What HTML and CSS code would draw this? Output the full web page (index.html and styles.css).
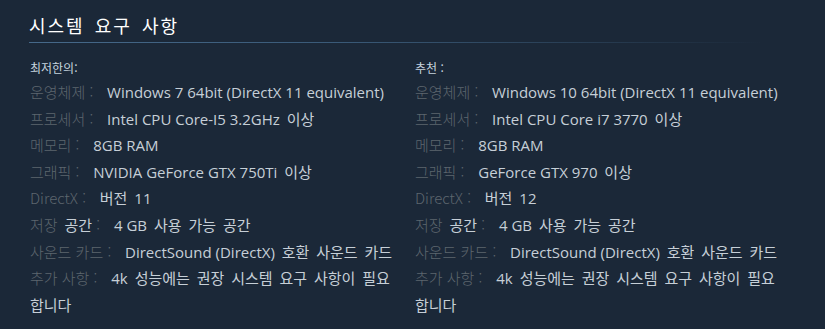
FILE: index.html
```html
<!DOCTYPE html>
<html lang="ko">
<head>
<meta charset="utf-8">
<title>시스템 요구 사항</title>
<link rel="stylesheet" href="styles.css">
</head>
<body>
<section class="sysreq">
  <h2 class="sysreq-title">시스템 요구 사항</h2>
  <div class="sysreq-cols">
    <div class="sysreq-col">
      <div class="sysreq-head">최저한의:</div>
      <ul class="sysreq-list">
        <li><span class="lbl">운영체제 :</span> Windows 7 64bit (DirectX 11 equivalent)</li>
        <li><span class="lbl">프로세서 :</span> Intel CPU Core-I5 3.2GHz<span class="ko"> 이상</span></li>
        <li><span class="lbl">메모리 :</span> 8GB RAM</li>
        <li><span class="lbl">그래픽 :</span> NVIDIA GeForce GTX 750Ti<span class="ko"> 이상</span></li>
        <li><span class="lbl">DirectX :</span> <span class="ko">버전 11</span></li>
        <li><span class="dim">저장</span> <span class="ko">공간</span><span class="lbl"> :</span> 4 GB<span class="ko"> 사용 가능 공간</span></li>
        <li><span class="lbl">사운드 카드 :</span> DirectSound (DirectX)<span class="ko"> 호환 사운드 카드</span></li>
        <li><span class="lbl">추가 사항 :</span> <span class="ko">4k 성능에는 권장 시스템 요구 사항이 필요합니다</span></li>
      </ul>
    </div>
    <div class="sysreq-col">
      <div class="sysreq-head">추천 :</div>
      <ul class="sysreq-list">
        <li><span class="lbl">운영체제 :</span> Windows 10 64bit (DirectX 11 equivalent)</li>
        <li><span class="lbl">프로세서 :</span> Intel CPU Core i7 3770<span class="ko"> 이상</span></li>
        <li><span class="lbl">메모리 :</span> 8GB RAM</li>
        <li><span class="lbl">그래픽 :</span> GeForce GTX 970<span class="ko"> 이상</span></li>
        <li><span class="lbl">DirectX :</span> <span class="ko">버전 12</span></li>
        <li><span class="dim">저장</span> <span class="ko">공간</span><span class="lbl"> :</span> 4 GB<span class="ko"> 사용 가능 공간</span></li>
        <li><span class="lbl">사운드 카드 :</span> DirectSound (DirectX)<span class="ko"> 호환 사운드 카드</span></li>
        <li><span class="lbl">추가 사항 :</span> <span class="ko">4k 성능에는 권장 시스템 요구 사항이 필요합니다</span></li>
      </ul>
    </div>
  </div>
</section>
</body>
</html>
```

FILE: styles.css
```css
html, body {
  margin: 0;
  padding: 0;
  background: #1b2838;
}

body {
  font-family: "Open Sans", "Noto Sans CJK KR", sans-serif;
  color: #c6d4df;
}

.sysreq {
  padding: 12px 0 0 30px;
  width: 770px;
}

.sysreq-title {
  margin: 0 0 0 -1px;
  font-family: "Noto Sans CJK KR", sans-serif;
  font-weight: normal;
  font-size: 18px;
  letter-spacing: 2px;
  word-spacing: 3px;
  line-height: 26px;
  color: #ffffff;
  padding-bottom: 4px;
  border-bottom: 1px solid transparent;
  border-image: linear-gradient(to right, #46698a 0%, #3a5a78 40%, rgba(59, 90, 120, 0) 95%) 1;
}

.sysreq-cols {
  display: grid;
  grid-template-columns: 370px 370px;
  column-gap: 15px;
  padding-top: 15px;
}

.sysreq-head {
  font-family: "Noto Sans CJK KR", sans-serif;
  font-size: 12px;
  line-height: 20px;
  color: #c6d4df;
  margin-bottom: 1px;
}

.sysreq-list {
  list-style: none;
  margin: 0;
  padding: 0;
  font-size: 15px;
  line-height: 26.6px;
  color: #c6cfd7;
}

.ko {
  word-spacing: 3px;
}

.lbl,
.dim {
  font-family: "Noto Sans CJK KR", sans-serif;
  font-weight: 300;
  color: #5d666e;
}

.lbl {
  margin-right: 10px;
}

.dim {
  margin-right: 3px;
}
```
